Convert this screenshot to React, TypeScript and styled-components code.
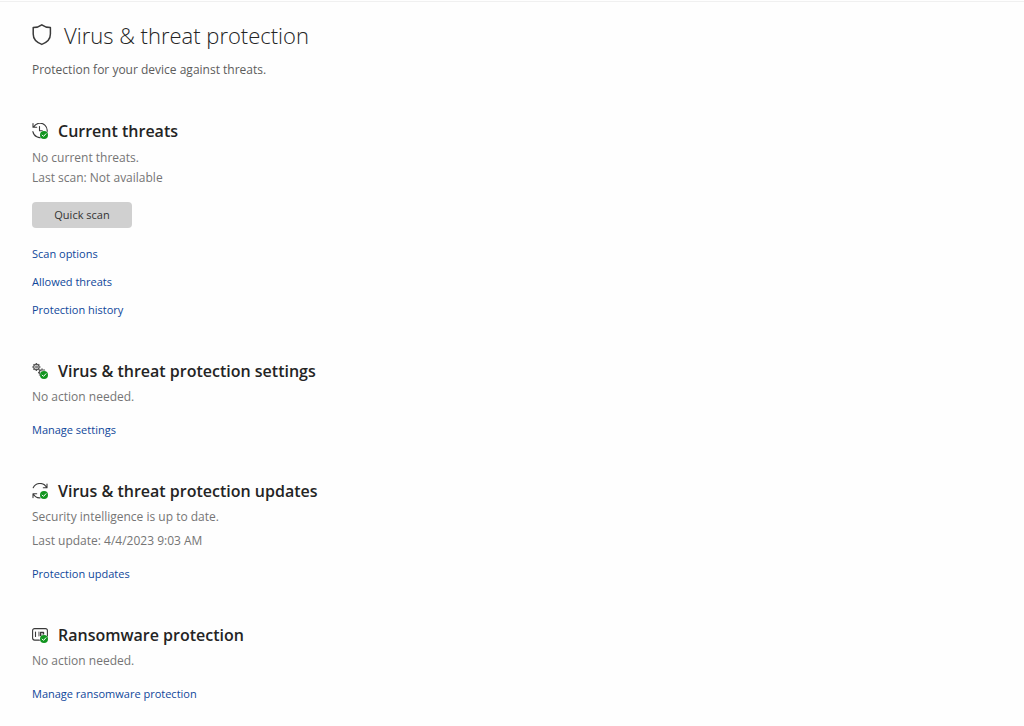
import React from "react";
import styled, { createGlobalStyle } from "styled-components";

const GlobalStyle = createGlobalStyle`
  body {
    margin: 0;
    background: #fefefe;
    font-family: "Open Sans", "Noto Sans", sans-serif;
    color: #242424;
  }
`;

const Page = styled.main`
  border-top: 1px solid #f0f0f0;
  margin-top: 1px;
  padding: 17px 32px 16px;
`;

const PageHeader = styled.header`
  margin-bottom: 39px;
`;

const TitleRow = styled.div`
  display: flex;
  align-items: center;
  gap: 12px;
`;

const Title = styled.h1`
  margin: 0;
  font-size: 22px;
  line-height: 32px;
  font-weight: 300;
`;

const Subtitle = styled.p`
  margin: 9px 0 0;
  font-size: 12px;
  line-height: 20px;
  color: #5c5c5c;
`;

const Section = styled.section`
  margin-bottom: 39px;

  &:last-child {
    margin-bottom: 0;
  }
`;

const SectionTitle = styled.div`
  display: flex;
  align-items: center;
  gap: 10px;
`;

const Heading = styled.h2`
  margin: 0;
  font-size: 16px;
  line-height: 24px;
  font-weight: 600;
`;

const Status = styled.div<{ $gap: number; $top: number }>`
  display: grid;
  gap: ${(p) => p.$gap}px;
  margin-top: ${(p) => p.$top}px;
`;

const Line = styled.p`
  margin: 0;
  font-size: 12px;
  line-height: 20px;
  color: #757575;
`;

const ScanButton = styled.button`
  display: block;
  width: 100px;
  height: 26px;
  margin: 14px 0 16px;
  padding: 0;
  border: 0;
  border-radius: 4px;
  background: #d0d0d0;
  color: #333;
  font: 11px/26px "Open Sans", "Noto Sans", sans-serif;
`;

const Links = styled.nav<{ $top: number }>`
  display: flex;
  flex-direction: column;
  align-items: flex-start;
  gap: 8px;
  margin-top: ${(p) => p.$top}px;
`;

const Link = styled.a`
  font-size: 11px;
  line-height: 20px;
  color: #0f479a;
  text-decoration: none;
`;

const Icon = styled.svg`
  flex: none;
  fill: none;
  stroke: #3a3a3a;
  stroke-linecap: round;
  stroke-linejoin: round;
`;

const CheckBadge = () => (
  <g stroke="none">
    <circle cx="12" cy="12" r="4.4" fill="#fefefe" />
    <circle cx="12" cy="12" r="4" fill="#12951f" />
    <path d="M10.2 12.1l1.3 1.3 2.4-2.6" fill="none" stroke="#fff" strokeWidth="1" />
  </g>
);

const ShieldIcon = () => (
  <Icon width="20" height="22" viewBox="0 0 20 22" strokeWidth="1.5" aria-hidden="true">
    <path d="M9.8 0.8C7.3 2.6 4.5 3.5 1.2 3.6v6.5c0 4.9 3 8.3 8.6 10.3 5.600-2 8.600-5.400 8.600-10.300V3.600C15.100 3.500 12.300 2.600 9.800 0.800z" />
  </Icon>
);

const HistoryIcon = () => (
  <Icon width="16" height="16" viewBox="0 0 16 16" strokeWidth="1.1" aria-hidden="true">
    <path d="M1 0.600v3.700h3.700M1.600 4.100A7.200 7.200 0 1 1 0.900 8.600M7.500 3.500v4.200h3" />
    <CheckBadge />
  </Icon>
);

const teeth = [0, 45, 90, 135, 180, 225, 270, 315];

const Gear = ({ x, y }: { x: number; y: number }) => (
  <g transform={`translate(${x} ${y})`} stroke="#555">
    <circle r="2.7" strokeWidth="1.2" />
    <circle r="0.9" strokeWidth="0.9" />
    {teeth.map((angle) => (
      <path key={angle} d="M0-3v-1" strokeWidth="1.4" strokeLinecap="butt" transform={`rotate(${angle})`} />
    ))}
  </g>
);

const GearsIcon = () => (
  <Icon width="16" height="16" viewBox="0 0 16 16" aria-hidden="true">
    <Gear x={4.4} y={4} />
    <Gear x={10} y={9.6} />
    <CheckBadge />
  </Icon>
);

const SyncIcon = () => (
  <Icon width="16" height="16" viewBox="0 0 16 16" strokeWidth="1.1" aria-hidden="true">
    <path d="M1.2 4.800A7.500 7.500 0 0 1 14.700 4.600M15 1V4.800h-3.700M1 14.600v-3.800h3.700M1.300 11A7.200 7.200 0 0 0 8.500 14.800" />
    <CheckBadge />
  </Icon>
);

const RansomwareIcon = () => (
  <Icon width="16" height="16" viewBox="0 0 16 16" strokeWidth="1.1" aria-hidden="true">
    <rect x="0.6" y="1.6" width="14.8" height="11.5" rx="2" />
    <path d="M3.5 5v4.500" />
    <rect x="8.5" y="5.500" width="3" height="3" strokeWidth="1.400" />
    <path d="M6.900 5v4" strokeWidth="0.800" />
    <CheckBadge />
  </Icon>
);

export default function App() {
  return (
    <>
      <GlobalStyle />
      <Page>
        <PageHeader>
          <TitleRow>
            <ShieldIcon />
            <Title>Virus &amp; threat protection</Title>
          </TitleRow>
          <Subtitle>Protection for your device against threats.</Subtitle>
        </PageHeader>

        <Section>
          <SectionTitle>
            <HistoryIcon />
            <Heading>Current threats</Heading>
          </SectionTitle>
          <Status $gap={0} $top={5}>
            <Line>No current threats.</Line>
            <Line>Last scan: Not available</Line>
          </Status>
          <ScanButton type="button">Quick scan</ScanButton>
          <Links $top={0}>
            <Link href="#scan-options">Scan options</Link>
            <Link href="#allowed-threats">Allowed threats</Link>
            <Link href="#history">Protection history</Link>
          </Links>
        </Section>

        <Section>
          <SectionTitle>
            <GearsIcon />
            <Heading>Virus &amp; threat protection settings</Heading>
          </SectionTitle>
          <Status $gap={0} $top={4}>
            <Line>No action needed.</Line>
          </Status>
          <Links $top={13}>
            <Link href="#settings">Manage settings</Link>
          </Links>
        </Section>

        <Section>
          <SectionTitle>
            <SyncIcon />
            <Heading>Virus &amp; threat protection updates</Heading>
          </SectionTitle>
          <Status $gap={4} $top={4}>
            <Line>Security intelligence is up to date.</Line>
            <Line>Last update: 4/4/2023 9:03 AM</Line>
          </Status>
          <Links $top={13}>
            <Link href="#updates">Protection updates</Link>
          </Links>
        </Section>

        <Section>
          <SectionTitle>
            <RansomwareIcon />
            <Heading>Ransomware protection</Heading>
          </SectionTitle>
          <Status $gap={0} $top={4}>
            <Line>No action needed.</Line>
          </Status>
          <Links $top={13}>
            <Link href="#ransomware">Manage ransomware protection</Link>
          </Links>
        </Section>
      </Page>
    </>
  );
}
